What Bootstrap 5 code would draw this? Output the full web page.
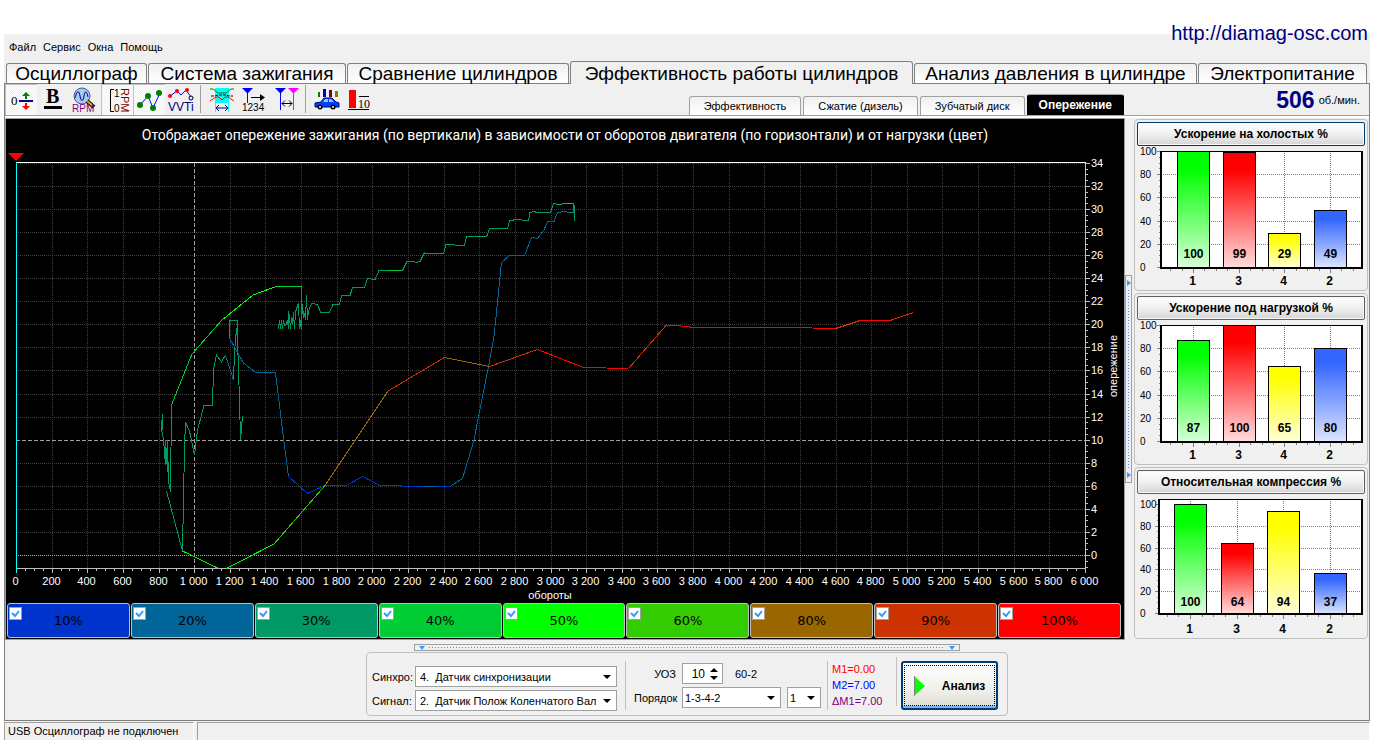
<!DOCTYPE html>
<html lang="ru">
<head>
<meta charset="utf-8">
<meta name="viewport" content="width=device-width, initial-scale=1">
<title>Diamag — Эффективность работы цилиндров</title>
<link href="https://cdn.jsdelivr.net/npm/bootstrap@5.3.0/dist/css/bootstrap.min.css" rel="stylesheet">
<style>
  :root { --face:#f0f0f0; --edge:#808080; --soft:#a0a0a0; --light:#c0c0c0; }
  body { background:#fff; color:#000; font:11px/16px "Liberation Sans", Arial, sans-serif; padding:34px 12px 0 4px; }
  .app { background:var(--face); }
  .site-link { position:absolute; top:20px; right:14px; font-size:20px; line-height:26px; color:#000080; }
  .menu-bar { height:27px; padding:0 0 2px 5px; gap:7px; }
  .menu-bar a { color:#000; }

  .main-tabs { height:22px; padding:0 3px 0 2px; gap:1px; flex-wrap:nowrap; border:0; align-items:flex-end; }
  .main-tabs .nav-item { flex:141 1 0; min-width:0; }
  .main-tabs .nav-item:nth-child(2) { flex-grow:198; }
  .main-tabs .nav-item:nth-child(3) { flex-grow:222; }
  .main-tabs .nav-item:nth-child(4) { flex-grow:343; }
  .main-tabs .nav-item:nth-child(5) { flex-grow:283; }
  .main-tabs .nav-item:nth-child(6) { flex-grow:169; }
  .main-tabs .nav-link { width:100%; height:20px; padding:0 4px; border:1px solid var(--edge); border-bottom:0; border-radius:3px 3px 0 0; margin:0;
    background:linear-gradient(#f0f0f0,#fff); color:#000; font-size:19px; line-height:19px; white-space:nowrap; }
  .main-tabs .nav-link.active { position:relative; height:23px; margin-bottom:-1px; line-height:21px; background:var(--face); border-color:var(--edge); color:#000; }

  .frame { border:1px solid var(--edge); }
  .tool-row { height:32px; border-bottom:1px solid var(--soft); }
  .tool { width:32px; height:31px; padding:0; border:0; background:none; }
  .tool.pressed { background:repeating-conic-gradient(#fff 0 25%, #f0f0f0 0 50%) 0 0/2px 2px; box-shadow:inset 1px 1px var(--light); }
  .tool svg { display:block; }
  .tool-gap { width:1px; height:28px; background:var(--soft); margin:1px 5px 0 3px; }
  .sub-tabs { gap:2px; border:0; align-items:flex-end; flex-wrap:nowrap; }
  .sub-tabs .nav-link { height:19px; padding:0 14px; border:1px solid var(--soft); border-bottom:0; border-radius:3px 3px 0 0; margin:0;
    background:linear-gradient(#f0f0f0,#fff); color:#000; line-height:18px; white-space:nowrap; }
  .sub-tabs .nav-link.active { height:21px; padding:0 11px; background:#000; border-color:#000; border-top-color:var(--soft); color:#fff; font-weight:bold; font-size:12px; }
  .rpm { width:245px; padding-right:9px; gap:4px; line-height:26px; }
  .rpm b { font-size:23px; color:#000080; }

  .work { border-top:2px solid #fff; }
  .plot-panel { min-width:0; background:#000; border:1px solid var(--soft); }
  .plot-title { height:31px; line-height:32px; font-family:Roboto, sans-serif; font-size:14px; color:#fff; }
  .plot-panel svg, .gauge svg { display:block; width:100%; height:auto; }
  svg text { font-family:"Liberation Sans", Arial, sans-serif; }
  .load-row { padding:1px 3px 1px 1px; gap:1px; }
  .load-key { position:relative; flex:1 1 0; height:35px; border:1px solid var(--light); border-radius:3px; font:13px/34px "DejaVu Sans", sans-serif; text-align:center; cursor:pointer; }
  .load-key input { position:absolute; left:1px; top:3px; width:13px; height:13px; margin:0; appearance:none; border:1px solid var(--soft);
    background:#fff; }
  .load-key input:checked { background:#fff url("data:image/svg+xml,%3Csvg xmlns='http://www.w3.org/2000/svg' viewBox='0 0 11 11'%3E%3Cpath d='M2 5l3 3 4-5' fill='none' stroke='%233399ff' stroke-width='2'/%3E%3C/svg%3E"); }

  .split-v, .split-h { border:1px solid var(--soft); display:flex; justify-content:space-between; align-items:center; }
  .split-v { width:7px; height:208px; flex-direction:column; padding:4px 0; align-self:center; }
  .split-h { width:546px; height:7px; padding:0 4px; }
  .split-v::before, .split-v::after { content:""; border:3px solid transparent; border-left:4px solid #3399ff; border-right:0; }
  .split-h::before, .split-h::after { content:""; border:3px solid transparent; border-top:4px solid #3399ff; border-bottom:0; }
  .split-v i { flex:1; width:1px; margin:4px 0; background:repeating-linear-gradient(#3399ff 0 1px, transparent 1px 3px); }
  .split-h i { flex:1; height:1px; margin:0 4px; background:repeating-linear-gradient(90deg, #3399ff 0 1px, transparent 1px 3px); }

  .side { width:237px; padding:1px 1px 0 2px; gap:2px; flex:none; }
  .gauge { border:1px solid var(--light); border-radius:4px; padding:2px; }
  .gauge button { display:block; width:100%; height:24px; padding:0; border:1px solid #606060; border-radius:2px; background:linear-gradient(#fff,#f0f0f0 50%,#d4d4d4);
    box-shadow:inset 0 0 0 1px #f8f8f8; font-size:12px; font-weight:bold; line-height:20px; color:#000; }
  .gauge button.focused { border-color:#003c74; }

  .dock { padding:4px 0; gap:1px; }
  .setup { border:1px solid var(--light); border-radius:4px; height:64px; padding:0 9px 0 5px; }
  .grid-a, .grid-b { display:grid; align-items:center; row-gap:3px; }
  .grid-a { grid-template-columns:40px 202px; column-gap:3px; padding-top:13px; }
  .grid-b { grid-template-columns:42px auto auto; column-gap:6px; padding:10px 6px 0 0; }
  .setup select, .setup .spin { height:21px; border:1px solid var(--soft); border-radius:0; background:#fff; color:#000; font:inherit; }
  .setup select { appearance:none; padding:0 20px 0 4px; background:#fff url("data:image/svg+xml,%3Csvg xmlns='http://www.w3.org/2000/svg' width='8' height='4'%3E%3Cpath d='M0 0h8L4 4z'/%3E%3C/svg%3E") no-repeat right 5px center; }
  .grid-b select { padding-left:2px; }
  .sel-order { width:99px; } .setup .sel-first { width:34px; padding-right:14px; }
  .spin { width:41px; }
  .spin input { width:22px; border:0; padding:0; background:none; text-align:right; font-size:12px; appearance:textfield; }
  .spin input::-webkit-inner-spin-button { appearance:none; }
  .uoz-cell { grid-column:2 / 4; gap:12px; }
  .rule-v { width:1px; height:49px; background:var(--light); }
  .marks { line-height:16px; width:64px; }
  .m-one { color:#f00; } .m-two { color:#00f; } .m-delta { color:#800080; }
  .go { width:97px; height:49px; border:2px solid #003c74; border-radius:3px; padding:1px; background:linear-gradient(#fff,#f0f0ea 60%,#dcdcd4); box-shadow:inset 0 -2px #7fb2f0;
    font-size:12px; font-weight:bold; color:#000; }
  .go span { border:1px dotted #000; gap:17px; height:41px; }
  .status { height:18px; margin-top:1px; gap:3px; }
  .status div { border:1px solid var(--soft); border-right-color:#fff; border-bottom:0; padding-left:3px; line-height:17px; }
  .status div:first-child { width:190px; }
</style>
</head>
<body>
<a class="site-link text-decoration-none" href="http://diamag-osc.com">http://diamag-osc.com</a>
<div class="app">
  <nav class="menu-bar d-flex align-items-center">
    <a class="text-decoration-none" href="#">Файл</a><a class="text-decoration-none" href="#">Сервис</a><a class="text-decoration-none" href="#">Окна</a><a class="text-decoration-none" href="#">Помощь</a>
  </nav>
  <ul class="nav nav-tabs main-tabs">
    <li class="nav-item"><button class="nav-link">Осциллограф</button></li>
    <li class="nav-item"><button class="nav-link">Система зажигания</button></li>
    <li class="nav-item"><button class="nav-link">Сравнение цилиндров</button></li>
    <li class="nav-item"><button class="nav-link active">Эффективность работы цилиндров</button></li>
    <li class="nav-item"><button class="nav-link">Анализ давления в цилиндре</button></li>
    <li class="nav-item"><button class="nav-link">Электропитание</button></li>
  </ul>

  <main class="frame">
    <div class="tool-row d-flex">
      <div class="d-flex" role="toolbar">
        <button class="tool pressed" aria-label="Ноль"><svg width="32" height="32"><text x="6" y="21" style="font:13px 'Liberation Serif'">0</text><path d="M14 17h14" stroke="#000080" stroke-width="2"/><path d="M21 8l4 4h-3v3h-2v-3h-3z" fill="#008000"/><path d="M21 26l4-4h-3v-3h-2v3h-3z" fill="red"/></svg></button>
        <button class="tool" aria-label="Жирные линии"><svg width="32" height="32"><text x="9" y="19" style="font:bold 20px 'Liberation Serif'">B</text><path d="M7 22h18v3H7z"/></svg></button>
        <button class="tool" aria-label="Поиск оборотов"><svg width="32" height="32"><circle cx="13" cy="12" r="8" fill="#a6caf0" stroke="#4060a0"/><path d="M6 14c2-8 4-8 5-2s3 6 4 0 3-5 4 1" fill="none" stroke="#000080"/><path d="M18 17l7 6" stroke="#000" stroke-width="4"/><path d="M18 17l6 5" stroke="#e0b020" stroke-width="2"/><text x="3" y="28" font-size="10" fill="#800080">RPM</text></svg></button>
        <button class="tool pressed" aria-label="Шкала оборотов"><svg width="32" height="32"><path d="M13 5.5H9.5v22H13" fill="none" stroke="#000"/><text x="13" y="13" font-size="10">1</text><text x="13" y="28" font-size="10">0</text><text transform="translate(20 4) rotate(90)" font-size="11" fill="#800000">RPM</text></svg></button>
        <button class="tool pressed" aria-label="Точки"><svg width="32" height="32"><path d="M7 21l8-9 5 12 7-15" fill="none" stroke="#00f"/><g fill="#008000"><circle cx="7" cy="21" r="3"/><circle cx="15" cy="12" r="3"/><circle cx="20" cy="24" r="3"/><circle cx="26" cy="9" r="3"/></g></svg></button>
        <button class="tool" aria-label="VVTi"><svg width="32" height="32"><path d="M5 12l7-5 4 4 5-5 5 7" fill="none" stroke="#00f"/><g fill="red"><circle cx="5" cy="12" r="2"/><circle cx="12" cy="7" r="2"/><circle cx="22" cy="6" r="2"/></g><circle cx="26" cy="14" r="2" fill="none" stroke="#000"/><text x="3" y="27" font-size="12" fill="#000080">VVTi</text></svg></button>
        <span class="tool-gap"></span>
        <button class="tool" aria-label="Интервал"><svg width="32" height="32"><path d="M9 4h14v15H9z" fill="#0ff"/><path d="M9.500 19v9m13-9v9" stroke="#0ff"/><path d="M4 5h3l5 4h8l5-4h3" fill="none" stroke="#008000"/><path d="M5 12h4l3-1h8l3 1h4" fill="none" stroke="#000" stroke-dasharray="3 1"/><path d="M4 17l6-4h3l3 3 3-3h3l6 4" fill="none" stroke="red"/><path d="M11 24h10m-8-3l-3 3 3 3m6-6l3 3-3 3" fill="none" stroke="#000080"/></svg></button>
        <button class="tool" aria-label="Нумерация"><svg width="32" height="32"><path d="M4 4h11l-5 5v10H9V9z" fill="#00f"/><path d="M13 13.5h12" stroke="#000"/><path d="M22 10l5 3.5-5 3.5z"/><text x="4" y="27" font-size="10">1234</text></svg></button>
        <button class="tool" aria-label="Маркеры"><svg width="32" height="32"><path d="M5 4h11l-5 5v17h-1V9z" fill="#00f"/><path d="M18 4h11l-5 5v17h-1V9z" fill="#f0f"/><path d="M12 19.5h10m-7-3l-3 3 3 3m4-6l3 3-3 3" fill="none" stroke="#000"/></svg></button>
        <span class="tool-gap"></span>
        <button class="tool" aria-label="Автомобиль"><svg width="32" height="32"><path d="M7 8h2v5H7z" fill="#008000"/><path d="M12 5h3v8h-3z" fill="#0000c0"/><path d="M18 6h3v7h-3z" fill="#800000"/><path d="M24 7h3v6h-3z" fill="#808000"/><path d="M4 19l6-1 3-4h8l4 4 3 1v4H4z" fill="#0040ff" stroke="#000080"/><path d="M12 18l2-3h3v3zm6 0v-3h2l3 3z" fill="#8cf"/><circle cx="9" cy="23" r="2.500"/><circle cx="22" cy="23" r="2.500"/><circle cx="9" cy="23" r="1" fill="#fff"/><circle cx="22" cy="23" r="1" fill="#fff"/></svg></button>
        <button class="tool" aria-label="Десять"><svg width="32" height="32"><path d="M6 6h7v18H6z" fill="red"/><path d="M5 25.5h21M16 12.5h10" stroke="#000"/><text x="15" y="24" style="font:12px 'Liberation Serif'">10</text></svg></button>
      </div>
      <ul class="nav nav-tabs sub-tabs ms-auto">
        <li><button class="nav-link">Эффективность</button></li>
        <li><button class="nav-link">Сжатие (дизель)</button></li>
        <li><button class="nav-link">Зубчатый диск</button></li>
        <li><button class="nav-link active">Опережение</button></li>
      </ul>
      <div class="rpm d-flex justify-content-end align-items-center"><b>506</b><span>об./мин.</span></div>
    </div>

    <div class="work d-flex">
      <section class="plot-panel flex-fill">
        <div class="plot-title text-center text-nowrap">Отображает опережение зажигания (по вертикали) в зависимости от оборотов двигателя (по горизонтали) и от нагрузки (цвет)</div>
        <svg id="plot" viewBox="6 150 1118 452" role="img" aria-label="Опережение зажигания"></svg>
        <div class="load-row d-flex" id="loads"></div>
      </section>
      <div class="split-v"><i></i></div>
      <aside class="side d-flex flex-column">
        <section class="gauge"><button class="focused">Ускорение на холостых %</button><svg id="g1" viewBox="0 0 228 142"></svg></section>
        <section class="gauge"><button>Ускорение под нагрузкой %</button><svg id="g2" viewBox="0 0 228 142"></svg></section>
        <section class="gauge"><button>Относительная компрессия %</button><svg id="g3" viewBox="0 0 228 142"></svg></section>
      </aside>
    </div>

    <div class="dock d-flex flex-column align-items-center">
      <div class="split-h"><i></i></div>
      <form class="setup d-flex align-items-start" onsubmit="return false">
        <div class="grid-a">
          <label for="sync">Синхро:</label><select id="sync"><option>4.&nbsp; Датчик синхронизации</option></select>
          <label for="sig">Сигнал:</label><select id="sig"><option>2.&nbsp; Датчик Полож Коленчатого Вала</option></select>
        </div>
        <span class="rule-v ms-2 me-2 mt-2"></span>
        <div class="grid-b">
          <label for="uoz" class="text-end">УОЗ</label>
          <div class="uoz-cell d-flex align-items-center">
            <div class="spin d-flex align-items-center"><input id="uoz" type="number" value="10"><svg width="9" height="14" class="ms-1"><path d="M1 5l4-4 4 4zM1 9l4 4 4-4z"/></svg></div>
            <span>60-2</span>
          </div>
          <label for="order">Порядок</label>
          <select id="order" class="sel-order"><option>1-3-4-2</option></select>
          <select class="sel-first" aria-label="Первый цилиндр"><option>1</option></select>
        </div>
        <span class="rule-v me-1 mt-2"></span>
        <div class="marks pt-2">
          <div class="m-one">M1=0.00</div><div class="m-two">M2=7.00</div><div class="m-delta">ΔM1=7.00</div>
        </div>
        <span class="rule-v me-1 mt-1"></span>
        <button class="go mt-2"><span class="d-flex align-items-center justify-content-center"><svg width="11" height="20"><path d="M0 0l11 10L0 20z" fill="#0f0"/><path d="M.5 20V0" stroke="#808080"/></svg>Анализ</span></button>
      </form>
    </div>
  </main>
  <footer class="status d-flex"><div>USB Осциллограф не подключен</div><div class="flex-fill"></div></footer>
</div>
<script src="https://cdn.jsdelivr.net/npm/bootstrap@5.3.0/dist/js/bootstrap.bundle.min.js"></script>
<script>
  // load colours, percent -> colour
  const LOAD = {10:'#0033cc',20:'#006699',30:'#009966',40:'#00cc33',50:'#00ff00',60:'#33cc00',80:'#996600',90:'#cc3300',100:'#ff0000'};
  document.getElementById('loads').innerHTML = Object.entries(LOAD).map(([p,c]) =>
    `<label class="load-key" style="background:${c}"><input type="checkbox" checked>${p}%</label>`).join('');

  // main plot: rpm along x, advance angle along y
  const X = r => Math.round(16 + r * 1069 / 6000) + .5, Y = a => Math.round(555 - a * 23.07 / 2) + .5;
  const line = (x1,y1,x2,y2,c,extra='') => `<path d="M${x1} ${y1}L${x2} ${y2}" stroke="${c}" ${extra}/>`;
  let s = '<g shape-rendering="crispEdges" fill="none">';
  for (let r = 200; r < 6000; r += 200) if (r !== 1000) s += line(X(r),163,X(r),568,'#404040','stroke-dasharray="1 1"');
  for (let a = 2; a <= 34; a += 2) if (a !== 10) s += line(16,Y(a),1085,Y(a),'#404040','stroke-dasharray="1 1"');
  s += line(X(1000),163,X(1000),568,'#a0a0a0','stroke-dasharray="4 2"') + line(16,Y(10),1085,Y(10),'#a0a0a0','stroke-dasharray="4 2"');
  s += line(16,Y(0),1085,Y(0),'#b0b0b0','stroke-dasharray="1 1"');
  s += line(16,568.5,1086,568.5,'#c0c0c0') + line(1085.5,162,1085.5,573,'#c0c0c0') + line(16,162.5,1086,162.5,'#fff');
  for (let r = 0; r <= 6000; r += 50) s += line(X(r),569,X(r),r % 200 ? 571 : 573,'#c0c0c0');
  for (let a = -1; a <= 34; a += .5) s += line(1086,Y(a),a % 2 ? 1088 : 1090,Y(a),'#c0c0c0');
  s += line(16.5,162,16.5,573,'#0ff') + '</g><path d="M8 153h16l-8 8z" fill="red"/><g fill="#fff" font-size="11">';
  for (let r = 0; r <= 6000; r += 200) s += `<text x="${X(r)-1}" y="585" text-anchor="middle">${String(r).replace(/(\d)(\d{3})$/,'$1 $2')}</text>`;
  for (let a = 0; a <= 34; a += 2) s += `<text x="1091" y="${Y(a)+3.5}">${a}</text>`;
  s += '<text x="550" y="599" text-anchor="middle">обороты</text><text transform="translate(1117 366) rotate(-90)" text-anchor="middle">опережение</text></g>';
  // traces: [load, points]
  const T = [
    [30,'162.5,414 162.5,430 161.5,420 161.5,430 163.5,439 165.5,465 165.5,440 167.5,472 167.5,440 168.5,482 170.5,491.5 170.5,463'],
    [30,'171.5,405 170.5,491'],
    [40,'171.5,405 192,354 222,320'],[50,'222,320 253,295 276,286.5'],[40,'276,286.5 301.5,286.5'],
    [30,'301.5,286.5 301.5,330 299.5,317 299.5,329 298.5,303 295.5,312 294.5,329 293.5,312 292.5,325 291.5,317 290.5,329 289.5,316 288.5,311 288.5,329 287.5,320 285.5,325 284.5,325 283.5,320 282.5,329 281.5,320 280.5,329 279.5,320 278.5,329'],
    [30,'301.5,325 302.5,304 303.5,318 304.5,313 305.5,320 306.5,295 307.5,320 308.5,311 311.5,303.5 317.5,304.5 320.5,312.5 329.5,312.5 333,304.5 339.5,304.5 341.5,295.5 350,296 352.5,287.5 364.5,287.5 367.5,278.5 375,279.5 379,270.5 402.5,270.5 407,261.5 414,261.5 416,262.5 420,261.5 424.5,252.5 426,253.5 443.5,253.5 446,244.5 464.5,245.5 466.5,236.5 486.5,237 489.5,228.5 507.5,229 509.5,221 515.5,219.5 528.5,220.5 530,212.5 534,211.5 537,212.5 550.5,212.5 553.5,203.5 558.5,204.5'],
    [40,'387,270.5 402,270.5'],[40,'558.5,204.5 565,203.5 573.5,203.5'],[30,'573.5,203.5 574.5,220.5 574,205 573.5,212.5 569,212.5'],
    [30,'166.5,491 182.5,551 184.5,447 185.5,422 189.5,431 194.5,455 197.5,430 204,405.5 212.5,405.5 213.5,370 216.5,355 221.5,362 225.5,355'],
    [20,'225.5,355 233.5,380'],[30,'233.5,380 234.5,353 236.5,328 237.5,341 239.5,400 240.5,440 242.5,416'],
    [30,'229.5,338 229.5,320.5 237.5,320.5 237.5,341'],
    [20,'229.5,338 235,348 243.5,363 255.5,372.5 275.5,372.5 283.5,438 288.5,476.5'],
    [10,'288.5,476.5 307.5,493.5 325,485.5 346,485.5 363,476.5 379.5,485.5 401.5,485.5 403,486.5 450,486.5'],[20,'423,486.5 436,486.5'],
    [20,'450,486.5 462.5,478.5 474,440 479.5,411.5 488.5,366.5 494,336.5 501.5,262.5 509.5,255.5 524.5,255.5 531.5,237.5 537.5,238.5 544,230 547.5,221.5 554,221.5 557.5,212.5 565,211.5 569,212.5'],
    [50,'182.5,551 218.5,568.5'],[50,'226.5,568.5 274,544'],[60,'274,544 325,485.5'],
    [80,'325,485.5 388,391'],[90,'388,391 444.5,357.5'],[80,'444.5,357.5 489.5,366.5'],[90,'489.5,366.5 537.5,349.5'],
    [100,'537.5,349.5 583.5,367.5 628.5,368.5'],[90,'628.5,368.5 666,325.5'],[100,'666,325.5 676,325.5 694,327.5 788.5,327.5 836,328.5'],
    [90,'836,328.5 860,320.5'],[100,'860,320.5 890,320.5'],[90,'890,320.5 913.5,312.5']];
  s += '<g fill="none" shape-rendering="crispEdges">' + T.map(([p,d]) => `<polyline points="${d}" stroke="${LOAD[p]}"/>`).join('') + '</g>';
  document.getElementById('plot').innerHTML = s;

  // side bar charts: cylinders in firing order 1-3-4-2
  const CYL = [['1','#00ff00','#d8ffd8'],['3','#ff0000','#ffdcdc'],['4','#ffff00','#ffffd8'],['2','#3366ff','#dce4ff']];
  function gauge(id, vals, left, full, base, xs) {
    const y = v => Math.round(base - v * (base - full) / 100), W = 33;
    let o = '<defs>' + CYL.map((c,i) => `<linearGradient id="${id}c${i}" x2="0" y2="1"><stop stop-color="${c[1]}"/><stop offset=".15" stop-color="${c[1]}"/><stop offset="1" stop-color="${c[2]}"/></linearGradient>`).join('') + '</defs><g shape-rendering="crispEdges">';
    o += `<rect x="${left}" y="5" width="${225-left}" height="${base-5}" fill="#fff"/>`;
    for (let v = 0; v <= 100; v += 5) o += line(left-(v%20?2:4),y(v)+.5,left,y(v)+.5,'#808080');
    for (let v = 20; v <= 80; v += 20) o += line(left,y(v)+.5,225,y(v)+.5,'#808080','stroke-dasharray="1 1"');
    const pitch = (xs[3]-xs[0])/3;
    for (let k = -2; k <= 14; k++) { const x = Math.round(xs[0]+16+k*pitch/4)+.5; o += line(x,base+2,x,base+(k%4?4:6),'#808080'); }
    xs.forEach(x => o += line(x+16.5,5,x+16.5,base,'#808080','stroke-dasharray="1 1"'));
    vals.forEach((v,i) => o += `<rect x="${xs[i]+.5}" y="${y(v)+.5}" width="${W-1}" height="${base-y(v)}" fill="url(#${id}c${i})" stroke="#000"/>`);
    o += `<path d="M${left} 5.5H226" stroke="#000"/><path d="M${left} 5V${base+1}H225V5" fill="none" stroke="#000" stroke-width="2"/></g>`;
    for (let v = 0; v <= 100; v += 20) o += `<text x="3" y="${y(v)+4}" font-size="10">${v}</text>`;
    vals.forEach((v,i) => o += `<text x="${xs[i]+16.5}" y="112" font-size="12" font-weight="bold" text-anchor="middle">${v}</text><text x="${xs[i]+15.5}" y="139" font-size="12" font-weight="bold" text-anchor="middle">${CYL[i][0]}</text>`);
    document.getElementById(id).innerHTML = o;
  }
  gauge('g1',[100,99,29,49],24,5,121,[40,86,131,177]);
  gauge('g2',[87,100,65,80],24,5,121,[40,86,131,177]);
  gauge('g3',[100,64,94,37],22,10,119,[37,84,130,177]);
</script>
</body>
</html>
